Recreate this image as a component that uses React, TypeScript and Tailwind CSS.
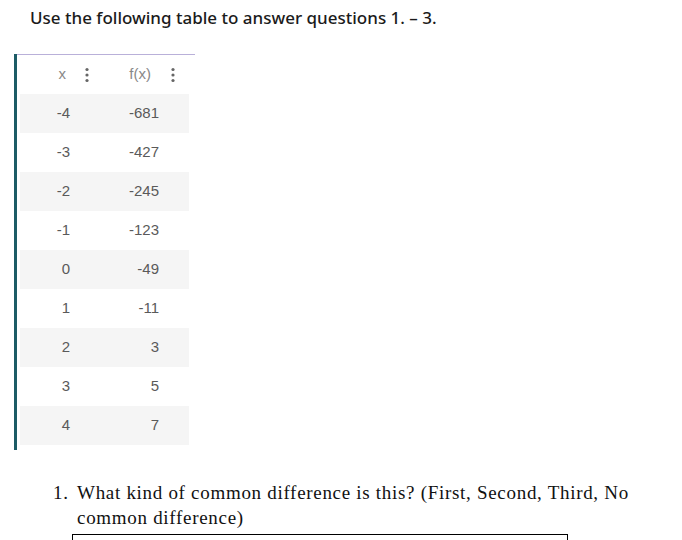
import React from 'react';

const rows: [string, string][] = [
  ['-4', '-681'],
  ['-3', '-427'],
  ['-2', '-245'],
  ['-1', '-123'],
  ['0', '-49'],
  ['1', '-11'],
  ['2', '3'],
  ['3', '5'],
  ['4', '7'],
];

const Dots = () => (
  <svg width="4" height="16" viewBox="0 0 4 16" className="inline-block">
    <circle cx="2" cy="2.5" r="1.6" fill="#666" />
    <circle cx="2" cy="8" r="1.6" fill="#666" />
    <circle cx="2" cy="13.5" r="1.6" fill="#666" />
  </svg>
);

export default function App() {
  return (
    <div className="w-[682px] h-[540px] overflow-hidden bg-white">
      <div
        className="pl-[30px] pt-[6px] text-[17px] font-medium text-[#1b1b1b] leading-[23px]"
        style={{ fontFamily: '"Noto Sans", sans-serif' }}
      >
        Use the following table to answer questions 1. – 3.
      </div>

      {/* table */}
      <div className="ml-[14px] mt-[25px] flex">
        <div className="w-[3px] h-[396px] bg-[#1d5c66]" />
        <div className="flex flex-col">
          <div className="h-px w-[178px] bg-[#b9b0d9]" />
          <div
            className="ml-[3px] w-[169px] text-[15px] text-[#5a5a5a]"
            style={{ fontFamily: '"Liberation Sans", Arial, sans-serif' }}
          >
            <div className="h-[39px] flex items-center text-[#888]">
              <div className="w-[69px] flex items-center justify-end gap-[19px]">
                <span>x</span>
                <Dots />
              </div>
              <div className="w-[86px] flex items-center justify-end gap-[20px]">
                <span>f(x)</span>
                <Dots />
              </div>
            </div>
            {rows.map(([x, y], i) => (
              <div
                key={x}
                className={`h-[39px] flex items-center ${i % 2 === 0 ? 'bg-[#f5f5f5]' : 'bg-white'}`}
              >
                <div className="w-[50px] text-right">{x}</div>
                <div className="w-[89px] text-right">{y}</div>
              </div>
            ))}
          </div>
        </div>
      </div>

      {/* question */}
      <div
        className="mt-[30px] pl-[53px] text-[19px] leading-[25px] tracking-[0.7px] text-[#111]"
        style={{ fontFamily: '"Liberation Serif", "Times New Roman", serif' }}
      >
        <div className="flex">
          <span className="w-[24px]">1.</span>
          <div>
            <div className="whitespace-nowrap">What kind of common difference is this? (First, Second, Third, No</div>
            <div>common difference)</div>
          </div>
        </div>
        <div className="ml-[19px] mt-[4px] w-[496px] h-[30px] border border-black" />
      </div>
    </div>
  );
}
